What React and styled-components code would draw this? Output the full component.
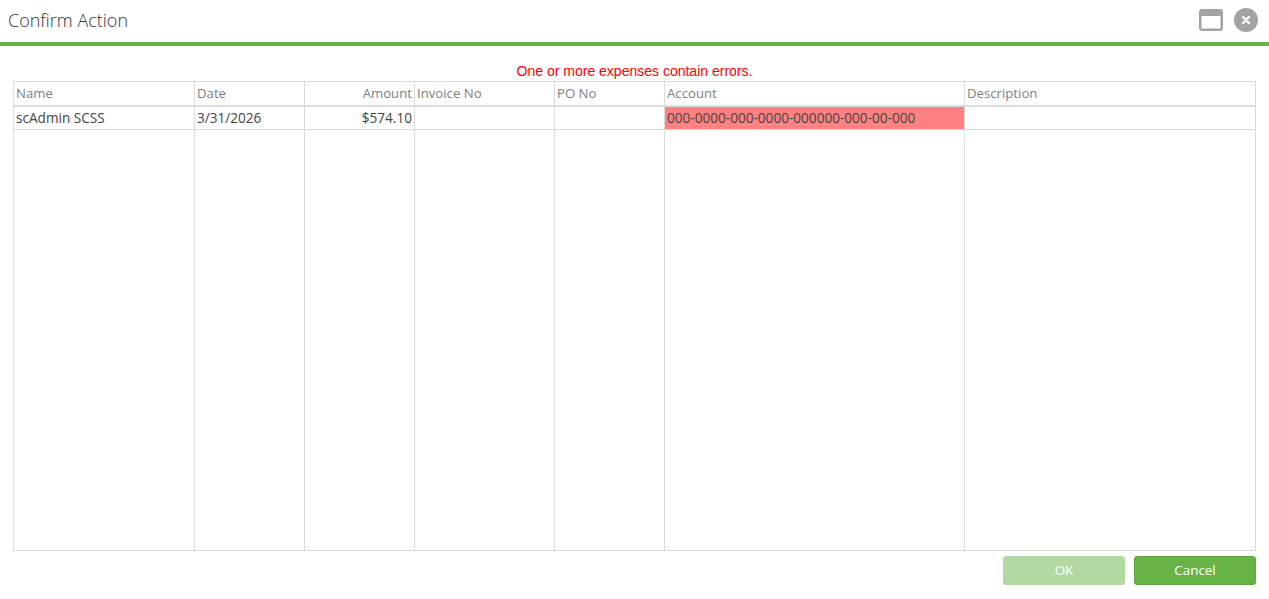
import React from "react";
import styled, { createGlobalStyle } from "styled-components";

const GlobalStyle = createGlobalStyle`
  html, body {
    margin: 0;
    padding: 0;
    background: #fff;
  }
  body {
    font-family: "Open Sans", "Noto Sans", sans-serif;
  }
`;

const columns = [
  { key: "name", label: "Name", width: 181 },
  { key: "date", label: "Date", width: 110 },
  { key: "amount", label: "Amount", width: 110, right: true },
  { key: "invoice", label: "Invoice No", width: 140 },
  { key: "po", label: "PO No", width: 110 },
  { key: "account", label: "Account", width: 300 },
  { key: "description", label: "Description", width: 290 },
];

const row = {
  name: "scAdmin SCSS",
  date: "3/31/2026",
  amount: "$574.10",
  invoice: "",
  po: "",
  account: "000-0000-000-0000-000000-000-00-000",
  description: "",
};

const Page = styled.div`
  width: 1269px;
  height: 599px;
  display: flex;
  flex-direction: column;
  overflow: hidden;
`;

const TitleBar = styled.header`
  height: 42px;
  box-sizing: border-box;
  padding: 0 11px 2px 8px;
  display: flex;
  align-items: center;
  justify-content: space-between;
`;

const Title = styled.h1`
  margin: 0;
  font-size: 18px;
  font-weight: 300;
  color: #333;
`;

const TitleIcons = styled.div`
  display: flex;
  align-items: center;
  gap: 11px;
`;

const GreenRule = styled.div`
  height: 4px;
  background: #67b346;
`;

const Body = styled.main`
  flex: 1;
  padding: 16px 13px 0;
  display: flex;
  flex-direction: column;
`;

const ErrorText = styled.div`
  height: 19px;
  line-height: 18px;
  text-align: center;
  font-family: "Liberation Sans", Arial, sans-serif;
  font-size: 14px;
  color: #f00;
`;

const Grid = styled.div`
  height: 470px;
  box-sizing: border-box;
  border: 1px solid #dcdcdc;
  display: flex;
  flex-direction: column;
`;

const HeadRow = styled.div`
  display: flex;
  height: 25px;
  box-sizing: border-box;
  border-bottom: 2px solid #dcdcdc;
`;

const HeadCell = styled.div`
  width: ${(p) => p.$width}px;
  box-sizing: border-box;
  padding: 0 2px;
  border-right: 1px solid #dcdcdc;
  line-height: 23px;
  font-size: 13.2px;
  color: #808080;
  text-align: ${(p) => (p.$right ? "right" : "left")};
  white-space: nowrap;

  &:last-child {
    border-right: 0;
    flex: 1;
  }
`;

const DataRow = styled.div`
  display: flex;
  height: 23px;
  box-sizing: border-box;
  border-bottom: 1px solid #dcdcdc;
`;

const DataCell = styled.div`
  width: ${(p) => p.$width}px;
  box-sizing: border-box;
  padding: 0 2px;
  border-right: 1px solid #dcdcdc;
  line-height: 22px;
  font-size: 13.6px;
  color: #444;
  background: ${(p) => (p.$error ? "#ff8080" : "transparent")};
  text-align: ${(p) => (p.$right ? "right" : "left")};
  white-space: nowrap;

  &:last-child {
    border-right: 0;
    flex: 1;
  }
`;

const FillRow = styled.div`
  flex: 1;
  display: flex;
`;

const FillCell = styled.div`
  width: ${(p) => p.$width}px;
  box-sizing: border-box;
  border-right: 1px solid #dcdcdc;

  &:last-child {
    border-right: 0;
    flex: 1;
  }
`;

const Footer = styled.footer`
  display: flex;
  justify-content: flex-end;
  gap: 9px;
  margin-top: 5px;
`;

const Button = styled.button`
  width: 122px;
  height: 29px;
  padding: 0 0 2px;
  box-sizing: border-box;
  border: 1px solid ${(p) => (p.disabled ? "#b3d9a2" : "#5ea63f")};
  border-radius: 3px;
  background: ${(p) => (p.disabled ? "#b3d9a2" : "#67b346")};
  color: #fff;
  font-family: inherit;
  font-size: 13.4px;
`;

const WindowIcon = () => (
  <svg width="24" height="22" viewBox="0 0 24 22" aria-hidden="true">
    <rect x="0" y="0" width="24" height="22" rx="3" fill="#a3a3a3" />
    <rect x="2.5" y="7" width="19" height="12.5" fill="#fff" />
  </svg>
);

const CloseIcon = () => (
  <svg width="24" height="24" viewBox="0 0 24 24" aria-hidden="true">
    <circle cx="12" cy="12" r="12" fill="#a3a3a3" />
    <path d="M9 9 L15 15 M15 9 L9 15" stroke="#fff" strokeWidth="2.4" strokeLinecap="round" />
  </svg>
);

export default function App() {
  return (
    <Page>
      <GlobalStyle />
      <TitleBar>
        <Title>Confirm Action</Title>
        <TitleIcons>
          <WindowIcon />
          <CloseIcon />
        </TitleIcons>
      </TitleBar>
      <GreenRule />
      <Body>
        <ErrorText>One or more expenses contain errors.</ErrorText>
        <Grid>
          <HeadRow>
            {columns.map((c) => (
              <HeadCell key={c.key} $width={c.width} $right={c.right}>
                {c.label}
              </HeadCell>
            ))}
          </HeadRow>
          <DataRow>
            {columns.map((c) => (
              <DataCell key={c.key} $width={c.width} $right={c.right} $error={c.key === "account"}>
                {row[c.key]}
              </DataCell>
            ))}
          </DataRow>
          <FillRow>
            {columns.map((c) => (
              <FillCell key={c.key} $width={c.width} />
            ))}
          </FillRow>
        </Grid>
        <Footer>
          <Button disabled>OK</Button>
          <Button>Cancel</Button>
        </Footer>
      </Body>
    </Page>
  );
}
